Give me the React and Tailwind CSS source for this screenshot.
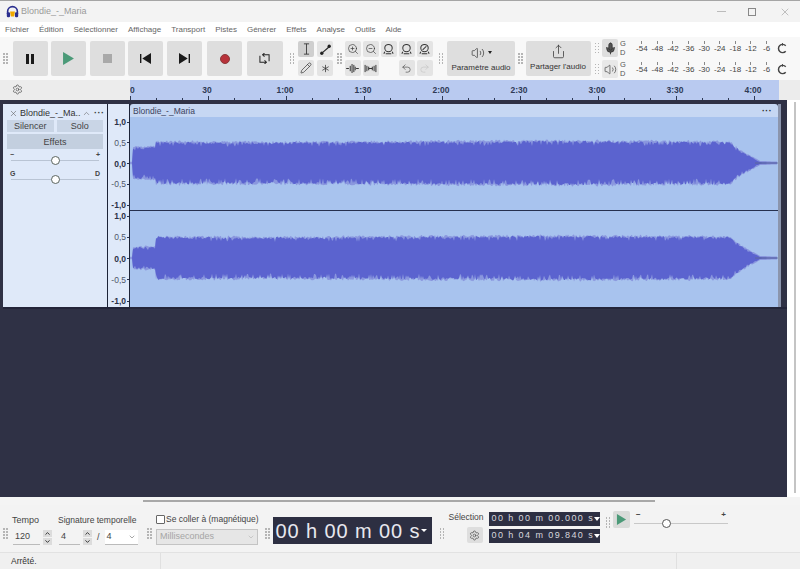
import { Mic, Pencil, Settings, Share, Undo2, Redo2, Volume2, ZoomIn, ZoomOut, X, ChevronUp, ChevronDown, Asterisk } from 'lucide-react'

const MENU = ['Fichier', 'Édition', 'Sélectionner', 'Affichage', 'Transport', 'Pistes', 'Générer', 'Effets', 'Analyse', 'Outils', 'Aide']
const TIMES = ['30', '1:00', '1:30', '2:00', '2:30', '3:00', '3:30', '4:00']
const DB = ['-54', '-48', '-42', '-36', '-30', '-24', '-18', '-12', '-6']
const AMP = ['1,0', '0,5', '0,0', '-0,5', '-1,0']

function Grip({ className = '' }) {
  return (
    <div className={`grid shrink-0 grid-cols-2 gap-[1.5px] ${className}`}>
      {[0, 1, 2, 3, 4, 5, 6, 7].map((i) => (
        <span key={i} className="h-[1.5px] w-[1.5px] bg-[#b5b5b5]" />
      ))}
    </div>
  )
}

function BigButton({ children, className = 'w-[35px]' }) {
  return <div className={`flex h-[35px] shrink-0 items-center justify-center rounded-[2px] bg-[#dedede] ${className}`}>{children}</div>
}

function SmallButton({ children, active }) {
  return (
    <div className={`flex h-[16px] w-[16px] items-center justify-center rounded-[2px] ${active ? 'bg-[#cfcfcf]' : 'bg-[#e4e4e4]'}`}>
      {children}
    </div>
  )
}

function ZoomFit({ mark }) {
  return (
    <svg viewBox="0 0 14 14" className="h-[13px] w-[13px]" fill="none" stroke="#333" strokeWidth="1.1">
      <circle cx="7" cy="5.5" r="4" />
      <path d="M4 11.5h6M3 9.5l-1 2M11 9.5l1 2" />
      {mark && <path d="M5 7.5l4-4" />}
    </svg>
  )
}

// pseudo random so the waveform stays the same between renders
function noise(i, seed) {
  const v = Math.sin(i * 12.9898 + seed * 78.233) * 43758.5453
  return v - Math.floor(v)
}

function envelope(x, start) {
  if (x < 3) return 0
  if (x < 26) return start + noise(Math.floor(x / 3), 9) * 3
  if (x < 600) return 20.5 - Math.sin(x / 90) * 0.6
  if (x < 610) return 20 - (x - 600) * 0.8
  if (x < 630) return 12 - (x - 610) * 0.55
  return Math.max(0.4, 1 - (x - 630) * 0.05)
}

function wavePath(width, center, start, seed, boost) {
  const top = []
  const bottom = []
  for (let x = 0; x < width; x += 1) {
    const a = envelope(x, start)
    const big = a > 2
    // sparse dips and spikes on top of a fine grain
    const grain = big ? noise(x, seed) * 0.12 : 0
    const dipTop = big && noise(x + 900, seed) > 0.88 ? 0.14 : 0
    const dipBottom = big && noise(x + 1400, seed) > 0.8 ? 0.18 : 0
    top.push(`${x},${(center - a * (0.94 + grain - dipTop) - boost).toFixed(1)}`)
    bottom.unshift(`${x},${(center + a * (0.94 + grain - dipBottom) + boost).toFixed(1)}`)
  }
  return [...top, ...bottom].join(' ')
}

function Wave({ height, center, start, seed }) {
  return (
    <svg viewBox={`0 0 648 ${height}`} className="block w-[648px] bg-[#a8c3ee]" style={{ height }}>
      <polygon points={wavePath(648, center, start, seed, 1.2)} fill="#8a97de" />
      <polygon points={wavePath(648, center, start, seed + 3, 0)} fill="#5b63cf" />
      <line x1="625" x2="648" y1={center} y2={center} stroke="#5e6a90" strokeWidth="0.8" />
    </svg>
  )
}

function AmpRuler({ className }) {
  return (
    <div className={`flex flex-col justify-between ${className}`}>
      {AMP.map((label, i) => (
        <div key={i} className={`flex h-[10px] items-center justify-end gap-[1px] text-[8.5px] leading-[10px] ${i % 2 === 0 ? 'font-bold text-[#2b3246]' : 'text-[#50576a]'}`}>
          {label}
          <span className="h-px w-[2px] bg-[#2b3350]" />
        </div>
      ))}
    </div>
  )
}

function Slider({ left, right }) {
  return (
    <div className="mx-[4px]">
      <div className="flex h-[8px] items-center justify-between px-[3px] text-[7px] font-bold text-[#444]">
        <span>{left}</span>
        <span>{right}</span>
      </div>
      <div className="relative mx-[4px] mt-[-3px] h-[10px]">
        <div className="absolute top-[4px] right-0 left-0 h-px bg-[#b9c4d4]" />
        <div className="absolute top-0 left-[40px] h-[9px] w-[9px] rounded-full border-[1.5px] border-[#5b6560] bg-white" />
      </div>
    </div>
  )
}

function Meter({ icon, active }) {
  return (
    <div className="flex h-[21px] items-center">
      <div className={`flex h-[18px] w-[16px] shrink-0 items-center justify-center rounded-[2px] ${active ? 'bg-[#dedede]' : 'bg-[#e8e8e8]'}`}>{icon}</div>
      <div className="ml-[2px] flex w-[8px] flex-col text-[7.5px] leading-[9px] text-[#555]">
        <span>G</span>
        <span>D</span>
      </div>
      <div className="mb-[3px] ml-[6px] flex gap-0">
        {DB.map((d) => (
          <div key={d} className="flex w-[15.6px] flex-col items-center text-[8px] leading-[9px] text-[#444]">
            <span className="h-[3px] w-px bg-[#888]" />
            {d}
          </div>
        ))}
      </div>
      <svg viewBox="0 0 12 12" className="ml-[3px] h-[11px] w-[11px]" fill="none" stroke="#444" strokeWidth="1.6">
        <path d="M9.5 3a4.5 4.5 0 1 0 0 6" />
        <path d="M6 0v3" strokeWidth="1" />
      </svg>
    </div>
  )
}

function SelectionBox({ value }) {
  return (
    <div className="flex h-[14px] w-[111px] items-center justify-between bg-[#2d2f42] px-[3px] text-[9px] tracking-[1.42px] whitespace-pre text-[#d8d8de]">
      {value}
      <span className="h-0 w-0 shrink-0 border-x-[3.5px] border-t-[4px] border-x-transparent border-t-white" />
    </div>
  )
}

function Spin() {
  return (
    <div className="ml-[3px] flex h-[15px] w-[9px] flex-col justify-between">
      <div className="flex h-[7px] items-center justify-center bg-[#dcdcdc] text-[#222]"><ChevronUp size={7} strokeWidth={3} /></div>
      <div className="flex h-[7px] items-center justify-center bg-[#dcdcdc] text-[#222]"><ChevronDown size={7} strokeWidth={3} /></div>
    </div>
  )
}

export default function App() {
  return (
    <div className="flex h-[569px] w-[800px] flex-col overflow-hidden bg-[#f4f4f4] font-['Liberation_Sans',sans-serif] text-[8px] text-[#444]">
      {/* title bar */}
      <div className="flex h-[22px] shrink-0 items-center border-t border-[#a5a5a5] bg-[#f3f3f3] pl-[6px]">
        <svg viewBox="0 0 16 16" className="h-[13px] w-[13px]">
          <path d="M2 11V8a6 6 0 0 1 12 0v3" fill="none" stroke="#2b2f8f" strokeWidth="2" />
          <rect x="1" y="9" width="4" height="6" rx="1.5" fill="#2b2f8f" />
          <rect x="11" y="9" width="4" height="6" rx="1.5" fill="#2b2f8f" />
          <path d="M5 8h6l-1 6H6z" fill="#f2a900" />
        </svg>
        <span className="ml-[2px] text-[9px] text-[#9a9a9a]">Blondie_-_Maria</span>
        <div className="ml-auto flex items-center text-[#888]">
          <span className="h-px w-[9px] bg-[#bbb]" />
          <span className="ml-[22px] h-[8px] w-[8px] border border-[#888]" />
          <X size={12} strokeWidth={1} className="mr-[9px] ml-[23px]" />
        </div>
      </div>

      {/* menu */}
      <div className="flex h-[15px] shrink-0 items-center gap-[10px] bg-white pl-[5px] text-[8px] text-[#666]">
        {MENU.map((m) => (
          <span key={m}>{m}</span>
        ))}
      </div>

      {/* toolbars */}
      <div className="flex h-[43px] shrink-0 items-center bg-[#f8f8f8] pl-[3px]">
        <Grip className="mr-[5px]" />
        <div className="flex gap-[3.5px]">
          <BigButton>
            <svg viewBox="0 0 10 10" className="h-[10px] w-[10px]"><path d="M1 0h3v10H1zM6 0h3v10H6z" fill="#1a1a1a" /></svg>
          </BigButton>
          <BigButton>
            <svg viewBox="0 0 12 12" className="h-[13px] w-[13px]"><path d="M1 0l10 6-10 6z" fill="#4b9a78" /></svg>
          </BigButton>
          <BigButton>
            <span className="h-[9px] w-[9px] bg-[#a9a9a9]" />
          </BigButton>
          <BigButton>
            <svg viewBox="0 0 12 12" className="h-[11px] w-[11px]"><path d="M0 1h1.5v10H0zM12 0v12L2.5 6z" fill="#1a1a1a" /></svg>
          </BigButton>
          <BigButton>
            <svg viewBox="0 0 12 12" className="h-[11px] w-[11px]"><path d="M10.5 1H12v10h-1.5zM0 0v12l9.5-6z" fill="#1a1a1a" /></svg>
          </BigButton>
          <BigButton className="ml-[2px] w-[35px]">
            <span className="h-[10px] w-[10px] rounded-full border border-[#8a3a3a] bg-[#b8323a]" />
          </BigButton>
          <BigButton className="ml-[1px] w-[36px]">
            <svg viewBox="0 0 12 12" className="h-[11px] w-[11px]" fill="none" stroke="#222" strokeWidth="1.1">
              <path d="M4 2h7v7M8 10H1V3" />
              <path d="M6 0L4 2l2 2M6 8l2 2-2 2" />
            </svg>
          </BigButton>
        </div>
        <Grip className="mr-[2px] ml-[7px]" />
        <div className="ml-[2px] grid grid-cols-[16px_16px] gap-x-[3px] gap-y-[3px]">
          <SmallButton active>
            <svg viewBox="0 0 10 14" className="h-[12px] w-[9px]" fill="none" stroke="#333" strokeWidth="1"><path d="M2 1h6M2 13h6M5 1v12" /></svg>
          </SmallButton>
          <SmallButton>
            <svg viewBox="0 0 14 14" className="h-[13px] w-[13px]" fill="#222"><path d="M2.5 11.5L11 4" stroke="#222" strokeWidth="1.2" /><circle cx="3" cy="11" r="1.8" /><circle cx="11" cy="3.5" r="1.8" /></svg>
          </SmallButton>
          <SmallButton><Pencil size={12} strokeWidth={1.4} color="#333" /></SmallButton>
          <SmallButton><Asterisk size={13} strokeWidth={1.4} color="#333" /></SmallButton>
        </div>
        <Grip className="ml-[4px]" />
        <div className="ml-[3px] grid grid-cols-[16px_16px_16px_16px_16px] gap-x-[2px] gap-y-[3px]">
          <SmallButton><ZoomIn size={12} strokeWidth={1.3} color="#333" /></SmallButton>
          <SmallButton><ZoomOut size={12} strokeWidth={1.3} color="#333" /></SmallButton>
          <SmallButton><ZoomFit /></SmallButton>
          <SmallButton><ZoomFit /></SmallButton>
          <SmallButton><ZoomFit mark /></SmallButton>
          <SmallButton>
            <svg viewBox="0 0 14 10" className="h-[9px] w-[13px]" fill="none" stroke="#333" strokeWidth="1.1"><path d="M0 5h3M11 5h3M4.5 2v6M6.5 0v10M8.5 1v8M10 3v4" /></svg>
          </SmallButton>
          <SmallButton>
            <svg viewBox="0 0 14 10" className="h-[9px] w-[13px]" fill="none" stroke="#333" strokeWidth="1.1"><path d="M1 1v8M3 2v6M5 3v4M5 5h4M9 3v4M11 2v6M13 1v8" /></svg>
          </SmallButton>
          <span />
          <SmallButton><Undo2 size={11} strokeWidth={1.4} color="#444" /></SmallButton>
          <SmallButton><Redo2 size={11} strokeWidth={1.4} color="#c4c4c4" /></SmallButton>
        </div>
        <Grip className="ml-[6px]" />
        <div className="ml-[4px] flex h-[35px] w-[68px] shrink-0 flex-col items-center justify-center rounded-[2px] bg-[#dedede]">
          <div className="flex h-[18px] items-center gap-[3px]">
            <Volume2 size={14} strokeWidth={1.2} color="#333" />
            <span className="h-0 w-0 border-x-[2.5px] border-t-[3px] border-x-transparent border-t-[#222]" />
          </div>
          <span className="text-[#333]">Paramètre audio</span>
        </div>
        <Grip className="ml-[3px]" />
        <div className="ml-[3px] flex h-[35px] w-[65px] shrink-0 flex-col items-center justify-center rounded-[2px] bg-[#dedede]">
          <Share size={15} strokeWidth={1.2} color="#333" className="mb-[2px]" />
          <span className="text-[#333]">Partager l'audio</span>
        </div>
        <div className="ml-[4px] flex flex-col">
          <div className="flex items-center">
            <Grip className="mr-[3px]" />
            <Meter active icon={<Mic size={13} strokeWidth={1.6} color="#333" fill="#555" />} />
          </div>
          <div className="flex items-center">
            <Grip className="mr-[3px]" />
            <Meter icon={<Volume2 size={13} strokeWidth={1.2} color="#333" />} />
          </div>
        </div>
      </div>

      {/* time ruler */}
      <div className="flex h-[20px] shrink-0 bg-[#ececec]">
        <div className="flex w-[130px] items-center pb-[1px] pl-[12px]">
          <Settings size={11} strokeWidth={1.4} color="#444" />
        </div>
        <div className="relative flex w-[649px] items-start overflow-hidden bg-[#b9caf0] pt-[4px] text-[8.5px] leading-[12px] font-bold text-[#2f3a55]">
          <span className="w-[38px] shrink-0">0</span>
          {TIMES.map((t) => (
            <span key={t} className="w-[78px] shrink-0 text-center">{t}</span>
          ))}
          <svg viewBox="0 0 649 4" className="absolute bottom-0 left-0 h-[4px] w-[649px]">
            {Array.from({ length: 25 }, (_, i) => (
              <line key={i} x1={i * 26 + 0.5} x2={i * 26 + 0.5} y1={i % 3 === 0 ? 0 : 2} y2="4" stroke="#2f3a55" />
            ))}
          </svg>
        </div>
      </div>

      {/* tracks */}
      <div className="flex min-h-0 flex-1">
        <div className="flex-1 bg-[#2f3145] pt-[4px] pl-[3px]">
          <div className="flex h-[203px]">
            <div className="w-[104px] shrink-0 bg-[#dfe9f9] pt-[3px]">
              <div className="flex h-[13px] items-center pl-[6px] text-[9px] whitespace-nowrap text-[#333]">
                <X size={9} strokeWidth={1.4} color="#555" />
                <span className="ml-[2px] w-[60px]">Blondie_-_Ma..</span>
                <ChevronUp size={9} strokeWidth={1.4} color="#555" className="ml-[2px]" />
                <span className="ml-[3px] font-bold tracking-[0.5px]">···</span>
              </div>
              <div className="grid grid-cols-2 gap-x-[3px] gap-y-[2px] px-[4px] text-[9px] leading-[12px] text-[#444]">
                <div className="bg-[#c9d5e6] text-center">Silencer</div>
                <div className="bg-[#c9d5e6] text-center">Solo</div>
                <div className="col-span-2 bg-[#c3cfdf] py-[1.5px] text-center">Effets</div>
              </div>
              <div className="mt-[2px] flex flex-col gap-[4px]">
                <Slider left="−" right="+" />
                <Slider left="G" right="D" />
              </div>
            </div>
            <div className="w-[23px] shrink-0 border-x border-[#1d2438] bg-[#dfe9f9]">
              <AmpRuler className="h-[106px] pt-[13px]" />
              <AmpRuler className="h-[96px] pt-[1px]" />
            </div>
            <div className="w-[648px] shrink-0">
              <div className="flex h-[13px] items-center justify-between rounded-t-[3px] bg-[#c6d7f3] px-[3px] pt-[1px] text-[8.5px] text-[#3b4360]">
                <span>Blondie_-_Maria</span>
                <span className="mr-[3px] font-bold tracking-[0.5px] text-[#222]">···</span>
              </div>
              <Wave height={93} center={46} start={14} seed={1} />
              <div className="h-px bg-[#26304f]" />
              <Wave height={96} center={47} start={9} seed={2} />
            </div>
            <div className="flex w-[7px] shrink-0 flex-col">
              <div className="w-[3px] flex-1 bg-[#8b95ad]" />
            </div>
          </div>
          <div className="h-[2px] bg-[#23253a]" />
        </div>
        <div className="flex w-[13px] shrink-0 justify-center bg-white pl-[2px]">
          <div className="mt-[2px] mb-[4px] w-[2px] bg-[#c4c4c4]" />
        </div>
      </div>

      {/* horizontal scroll */}
      <div className="flex h-[8px] shrink-0 items-center bg-[#f4f4f4] pl-[143px]">
        <div className="h-[2px] w-[512px] bg-[#a8a8a8]" />
      </div>

      {/* bottom toolbars */}
      <div className="flex h-[47px] shrink-0 items-start bg-[#f3f3f3] text-[#444]">
        <Grip className="mt-[23px] ml-[3px]" />
        <div className="ml-[4.5px] flex w-[46px] shrink-0 flex-col pt-[9px]">
          <span className="text-[9px] leading-[13px]">Tempo</span>
          <div className="mt-[3px] flex items-center">
            <span className="ml-[1px] w-[27px] border-b border-[#bbb] pb-[1px] pl-[2px] text-[9px] leading-[13px]">120</span>
            <Spin />
          </div>
        </div>
        <div className="flex w-[80px] shrink-0 flex-col pt-[9px]">
          <span className="text-[8.5px] leading-[13px] whitespace-nowrap">Signature temporelle</span>
          <div className="mt-[3px] flex items-center">
            <span className="ml-[1px] w-[21px] border-b border-[#bbb] pb-[1px] pl-[2px] text-[9px] leading-[13px]">4</span>
            <Spin />
            <span className="ml-[5px] text-[9px]">/</span>
            <div className="ml-[5px] flex w-[33px] shrink-0 items-center justify-between border-b border-[#bbb] bg-white pb-[1px] pl-[2px] text-[9px] leading-[13px]">
              4
              <ChevronDown size={8} strokeWidth={1.4} className="mr-[2px]" />
            </div>
          </div>
        </div>
        <Grip className="mt-[23px] ml-[9px]" />
        <div className="ml-[4.5px] flex w-[102px] shrink-0 flex-col pt-[8px]">
          <div className="flex items-center gap-[1px]">
            <span className="h-[9px] w-[9px] shrink-0 rounded-[1px] border border-[#666] bg-white" />
            <span className="text-[8.5px] leading-[13px] whitespace-nowrap">Se coller à (magnétique)</span>
          </div>
          <div className="mt-[3px] flex h-[16px] w-[102px] items-center justify-between border border-[#c4c4c4] bg-[#e6e6e6] pl-[3px] text-[9px] text-[#a5a5a5]">
            Millisecondes
            <ChevronDown size={8} strokeWidth={1.4} className="mr-[2px]" />
          </div>
        </div>
        <Grip className="mt-[23px] ml-[7px]" />
        <div className="mt-[12px] ml-[3px] flex h-[27px] w-[159px] shrink-0 items-center bg-[#2d2f42] pl-[3px] text-[20px] tracking-[0.9px] whitespace-pre text-[#e8e8ee]">
          00 h 00 m 00 s
          <span className="ml-[1px] h-0 w-0 border-x-[3px] border-t-[3px] border-x-transparent border-t-white" />
        </div>
        <Grip className="mt-[23px] ml-[8px]" />
        <div className="ml-[4.5px] flex w-[35px] shrink-0 flex-col items-end pt-[6px]">
          <span className="text-[8.5px] leading-[12px]">Sélection</span>
          <div className="mt-[4px] mr-[1px] flex h-[16px] w-[16px] items-center justify-center rounded-[2px] bg-[#dedede]">
            <Settings size={11} strokeWidth={1.4} color="#444" />
          </div>
        </div>
        <div className="ml-[5px] flex flex-col gap-[3px] pt-[7px]">
          <SelectionBox value="00 h 00 m 00.000 s" />
          <SelectionBox value="00 h 04 m 09.840 s" />
        </div>
        <Grip className="mt-[12px] ml-[6px]" />
        <div className="mt-[6px] ml-[3px] flex h-[17px] w-[17px] shrink-0 items-center justify-center rounded-[2px] bg-[#d9dbd9]">
          <svg viewBox="0 0 12 12" className="h-[11px] w-[11px]"><path d="M1 0l10 6-10 6z" fill="#4b9a78" /></svg>
        </div>
        <div className="mt-[6px] ml-[4px] w-[94px] shrink-0">
          <div className="flex h-[8px] items-center justify-between px-[2px] text-[8px] font-bold">
            <span>−</span>
            <span>+</span>
          </div>
          <div className="relative h-[10px]">
            <div className="absolute top-[4px] right-0 left-0 h-px bg-[#c8c8c8]" />
            <div className="absolute top-0 left-[28px] h-[9px] w-[9px] rounded-full border-[1.5px] border-[#555] bg-white" />
          </div>
        </div>
      </div>

      {/* status */}
      <div className="flex h-[17px] shrink-0 items-center border-t border-[#e2e2e2] bg-[#f0f0f0] pl-[11px] text-[8.5px] font-medium text-[#333]">
        <span className="w-[149px]">Arrêté.</span>
        <span className="h-full w-px bg-[#e0e0e0]" />
        <span className="ml-[515px] h-full w-px bg-[#e0e0e0]" />
      </div>
    </div>
  )
}
